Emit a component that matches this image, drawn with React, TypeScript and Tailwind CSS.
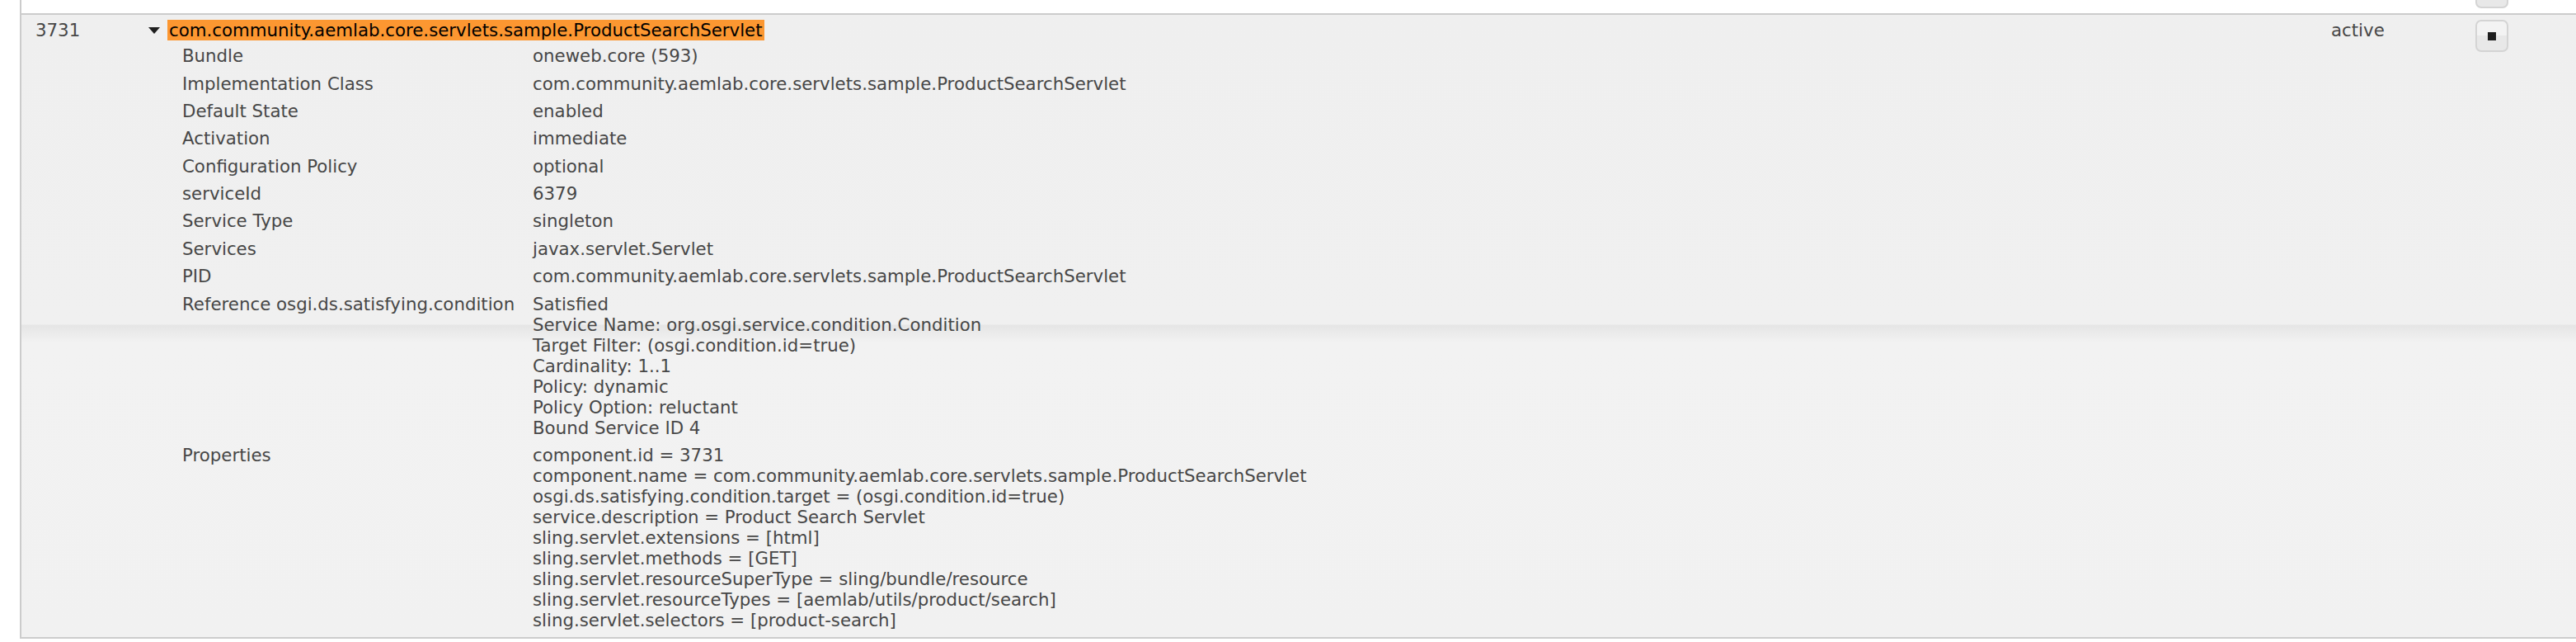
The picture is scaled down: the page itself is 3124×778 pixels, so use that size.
import React from "react";

const details: { label: string; lines: string[] }[] = [
  { label: "Bundle", lines: ["oneweb.core (593)"] },
  { label: "Implementation Class", lines: ["com.community.aemlab.core.servlets.sample.ProductSearchServlet"] },
  { label: "Default State", lines: ["enabled"] },
  { label: "Activation", lines: ["immediate"] },
  { label: "Configuration Policy", lines: ["optional"] },
  { label: "serviceId", lines: ["6379"] },
  { label: "Service Type", lines: ["singleton"] },
  { label: "Services", lines: ["javax.servlet.Servlet"] },
  { label: "PID", lines: ["com.community.aemlab.core.servlets.sample.ProductSearchServlet"] },
  {
    label: "Reference osgi.ds.satisfying.condition",
    lines: [
      "Satisfied",
      "Service Name: org.osgi.service.condition.Condition",
      "Target Filter: (osgi.condition.id=true)",
      "Cardinality: 1..1",
      "Policy: dynamic",
      "Policy Option: reluctant",
      "Bound Service ID 4",
    ],
  },
  {
    label: "Properties",
    lines: [
      "component.id = 3731",
      "component.name = com.community.aemlab.core.servlets.sample.ProductSearchServlet",
      "osgi.ds.satisfying.condition.target = (osgi.condition.id=true)",
      "service.description = Product Search Servlet",
      "sling.servlet.extensions = [html]",
      "sling.servlet.methods = [GET]",
      "sling.servlet.resourceSuperType = sling/bundle/resource",
      "sling.servlet.resourceTypes = [aemlab/utils/product/search]",
      "sling.servlet.selectors = [product-search]",
    ],
  },
];

const ActionButton = ({ className = "" }: { className?: string }) => (
  <button
    className={`w-[40px] h-[39px] rounded-[7px] border-2 border-[#d4d4d4] bg-[linear-gradient(to_bottom,#f3f3f3_0,#f3f3f3_50%,#e8e8e8_50%,#e8e8e8_100%)] flex items-center justify-center ${className}`}
  >
    <span className="block w-[10px] h-[10px] bg-[#1e1e1e]" />
  </button>
);

export default function App() {
  return (
    <div className="min-h-screen bg-white text-[21.3px] leading-[25px] text-[#474747] font-['DejaVu_Sans',Verdana,sans-serif]">
      <div className="ml-[24px] border-l-2 border-[#cccccc]">
        {/* tail of the previous row */}
        <div className="h-[16px] overflow-hidden flex justify-end pr-[82px]">
          <ActionButton className="-mt-[29px]" />
        </div>

        <div className="border-y-2 border-[#cccccc] bg-[linear-gradient(to_bottom,#efefef_0,#f0f0f0_375px,#e5e5e5_376px,#f2f2f2_397px,#f1f1f1_100%)] pb-[4px]">
          <div className="flex pt-[6px]">
            <div className="w-[154px] pl-[17px]">3731</div>

            <div className="flex-1">
              <div className="flex items-center">
                <span className="w-0 h-0 border-l-[7px] border-r-[7px] border-t-[8px] border-l-transparent border-r-transparent border-t-[#1e1e1e] mr-[9px]" />
                <span className="bg-[#fc9731] text-black px-[2px]">
                  com.community.aemlab.core.servlets.sample.ProductSearchServlet
                </span>
              </div>

              <div className="ml-[41px] mt-[2px]">
                {details.map((d) => (
                  <div key={d.label} className="flex py-[4.2px]">
                    <div className="w-[425px] shrink-0">{d.label}</div>
                    <div>
                      {d.lines.map((l, i) => (
                        <div key={i}>{l}</div>
                      ))}
                    </div>
                  </div>
                ))}
              </div>
            </div>

            <div className="w-[175px]">active</div>

            <div className="w-[122px]">
              <ActionButton />
            </div>
          </div>
        </div>
      </div>
    </div>
  );
}
